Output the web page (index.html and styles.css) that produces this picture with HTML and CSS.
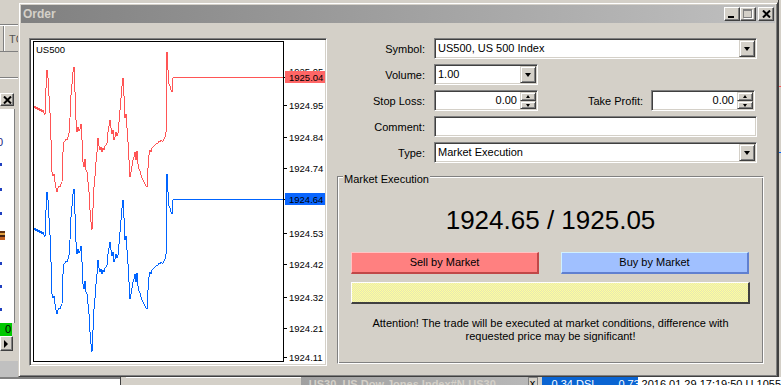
FILE: index.html
```html
<!DOCTYPE html>
<html>
<head>
<meta charset="utf-8">
<title>Order</title>
<link rel="stylesheet" href="styles.css">
</head>
<body>
<div class="desk">
  <div class="bgleft">
    <div class="bl-tool"><span class="bl-sep"></span><span class="bl-tc">TC</span></div>
    <div class="bl-rule"></div>
    <div class="bl-x">
      <svg width="9" height="8" viewBox="0 0 9 8"><path d="M1 0.5L8 7.5M8 0.5L1 7.5" stroke="#000" stroke-width="2"/></svg>
    </div>
    <div class="bl-list">
      <span class="bl-zero">0</span>
      <span class="bl-dot d1"></span>
      <span class="bl-dot d2"></span>
      <span class="bl-dot d3"></span>
      <span class="bl-ico"></span>
      <span class="bl-dot d4"></span>
      <span class="bl-dot d5"></span>
      <span class="bl-dot d6"></span>
    </div>
    <div class="bl-green">0</div>
    <div class="bl-arrow">
      <svg width="5" height="8" viewBox="0 0 5 8"><path d="M0 0L4 4L0 8Z" fill="#000"/></svg>
    </div>
    <div class="bl-dark"></div>
  </div>

  <div class="bgright">
    <span class="br-red"></span>
    <span class="br-blue"></span>
  </div>

  <div class="bgbottom">
    <div class="bb-a"></div>
    <div class="bb-b"></div>
    <div class="bb-c"></div>
    <div class="bb-title">US30, US Dow Jones Index#N-US30</div>
    <div class="bb-x">x</div>
    <div class="bb-blue">0.34 DSL &nbsp; &nbsp; &nbsp; 0.73</div>
    <div class="bb-white">2016.01.29 17:19:50 U 1055</div>
  </div>

  <div class="dialog">
    <div class="titlebar">
      <span class="title">Order</span>
      <div class="tbtns">
        <span class="tbtn tb-min"><i class="min-bar"></i></span>
        <span class="tbtn tb-max"><i class="max-box"></i></span>
        <span class="tbtn tb-close">
          <svg width="9" height="8" viewBox="0 0 9 8"><path d="M1 0.5L8 7.5M8 0.5L1 7.5" stroke="#000" stroke-width="2"/></svg>
        </span>
      </div>
    </div>

    <div class="body">
      <div class="chart">
        <svg class="chart-svg" width="294" height="324" viewBox="31 40 294 324">
          <defs>
            <polyline id="series" fill="none" points="34,108 35,106 36,109 37,107 38,110 39,108 40,111 41,109 42,112 43,110 44,113 45,115 46,88 47,70 48,78 49,96 50,113 51,140 52,172 53,176 54,174 55,182 56,188 57,192 58,188 59,186 60,187 61,184 62,182 63,152 64,142 65,141 66,139 67,140 68,137 69,133 70,118 71,95 72,84 73,72 74,67 75,92 76,120 77,132 78,127 79,131 80,129 81,124 82,140 83,162 84,167 85,159 86,170 87,172 88,182 89,192 90,210 91,222 92,230 93,208 94,187 95,176 96,162 97,152 98,138 99,146 100,150 101,147 102,152 103,148 104,150 105,146 106,145 107,143 108,132 109,126 110,120 111,128 112,134 113,130 114,140 115,137 116,132 117,136 118,133 119,122 120,110 121,98 122,86 123,78 124,96 125,118 126,114 127,128 128,142 129,160 130,177 131,172 132,166 133,160 134,157 135,152 136,160 137,151 138,164 139,169 140,171 141,175 142,178 143,180 144,182 145,184 146,186 147,187 148,168 149,155 150,150 151,152 152,148 153,147 154,146 155,145 156,144 157,143 158,143 159,141 160,142 161,140 162,141 163,141 164,139 165,137 166,132 166,100 167,52 168,70 169,84 170,86 171,90 172,92 173,78 174,77 283,77"/>
          </defs>
          <rect x="33.5" y="41.5" width="250" height="320" fill="#fff" stroke="#000"/>
          <text class="sym" x="36" y="53">US500</text>
          <use href="#series" stroke="#ff5555"/>
          <use href="#series" y="122" stroke="#0064ff"/>
          <g stroke="#000" class="ticks">
            <path d="M284 77.5h3M284 105.5h3M284 137.5h3M284 168.5h3M284 199.5h3M284 233.5h3M284 264.5h3M284 297.5h3M284 328.5h3M284 357.5h3"/>
          </g>
          <g class="axis">
            <text x="289" y="75">1925.05</text>
            <rect x="285" y="71" width="41" height="12" fill="#ff6666"/>
            <text x="289" y="81" fill="#fff">1925.04</text>
            <text x="289" y="109">1924.95</text>
            <text x="289" y="141">1924.84</text>
            <text x="289" y="172">1924.74</text>
            <rect x="285" y="193" width="41" height="12" fill="#0a66ff"/>
            <text x="289" y="203" fill="#fff">1924.64</text>
            <text x="289" y="237">1924.53</text>
            <text x="289" y="268">1924.42</text>
            <text x="289" y="301">1924.32</text>
            <text x="289" y="332">1924.21</text>
            <text x="289" y="361">1924.11</text>
          </g>
        </svg>
      </div>

      <div class="form">
        <div class="row">
          <span class="lbl">Symbol:</span>
          <div class="field wide">US500, US 500 Index<span class="dd"><i class="tri"></i></span></div>
        </div>
        <div class="row">
          <span class="lbl">Volume:</span>
          <div class="field small">1.00<span class="dd"><i class="tri"></i></span></div>
        </div>
        <div class="row">
          <span class="lbl">Stop Loss:</span>
          <div class="field small num">0.00<span class="spin"><b class="up"><i class="tri-up"></i></b><b class="dn"><i class="tri-dn"></i></b></span></div>
          <span class="lbl tp">Take Profit:</span>
          <div class="field small num">0.00<span class="spin"><b class="up"><i class="tri-up"></i></b><b class="dn"><i class="tri-dn"></i></b></span></div>
        </div>
        <div class="row">
          <span class="lbl">Comment:</span>
          <div class="field wide"></div>
        </div>
        <div class="row">
          <span class="lbl">Type:</span>
          <div class="field wide">Market Execution<span class="dd"><i class="tri"></i></span></div>
        </div>

        <div class="group">
          <span class="legend">Market Execution</span>
          <div class="quote">1924.65 / 1925.05</div>
          <div class="btns">
            <div class="btn sell">Sell by Market</div>
            <div class="btn buy">Buy by Market</div>
          </div>
          <div class="bar"></div>
          <p class="note">Attention! The trade will be executed at market conditions, difference with<br>requested price may be significant!</p>
        </div>
      </div>
    </div>
  </div>
</div>
</body>
</html>
```

FILE: styles.css
```css
* { box-sizing: border-box; }
html, body { margin: 0; padding: 0; }
body {
  width: 781px;
  height: 385px;
  overflow: hidden;
  background: #d4d0c8;
  font-family: "Liberation Sans", Arial, sans-serif;
  font-size: 11px;
  color: #000;
}
.desk { position: relative; width: 781px; height: 385px; overflow: hidden; }

/* ---------- background windows ---------- */
.bgleft {
  position: absolute; left: 0; top: 0; width: 18px; height: 377px;
  display: flex; flex-direction: column; overflow: hidden;
}
.bl-tool {
  margin-top: 24px; height: 28px; position: relative;
  border-top: 1px solid #808080; border-bottom: 1px solid #808080;
  box-shadow: inset 0 1px #fff;
}
.bl-sep { position: absolute; left: 3px; top: 1px; bottom: 0; width: 2px; border-left: 1px solid #808080; border-right: 1px solid #fff; }
.bl-tc { position: absolute; left: 9px; top: 8px; color: #555; font-size: 11px; }
.bl-rule { margin-top: 25px; height: 2px; border-top: 1px solid #808080; border-bottom: 1px solid #fff; }
.bl-x {
  margin-top: 14px; width: 14px; height: 13px;
  border: 1px solid; border-color: #fff #404040 #404040 #fff;
  box-shadow: inset -1px -1px #808080;
  display: flex; align-items: center; justify-content: center;
}
.bl-list {
  margin-top: 3px; height: 214px; width: 15px; background: #fff;
  border-right: 1px solid #808080; position: relative;
}
.bl-zero { position: absolute; left: -3px; top: 27px; color: #1a237e; font-size: 11px; }
.bl-dot { position: absolute; left: 0; width: 2px; height: 3px; background: #2040c0; }
.d1 { top: 54px; } .d2 { top: 79px; } .d3 { top: 103px; } .d4 { top: 153px; } .d5 { top: 176px; } .d6 { top: 199px; }
.bl-ico { position: absolute; left: 0; top: 122px; width: 5px; height: 9px; background: linear-gradient(#603010 0 2px, #e0a040 2px 4px, #402010 4px 6px, #c06020 6px); }
.bl-green {
  width: 12px; height: 13px; background: #00c800;
  font-size: 11px; line-height: 13px; text-align: right; padding-right: 1px;
}
.bl-arrow {
  width: 13px; height: 15px;
  border: 1px solid; border-color: #fff #404040 #404040 #fff;
  box-shadow: inset -1px -1px #808080;
  display: flex; align-items: center; justify-content: center;
}
.bl-dark { margin-top: 10px; flex: 1; background: #c0c0c0; }

.bgright { position: absolute; left: 778px; top: 0; width: 3px; height: 377px; border-left: 1px solid #404040; }
.br-red { position: absolute; left: 0; top: 86px; width: 3px; height: 1px; background: #ff5555; }
.br-blue { position: absolute; left: 0; top: 152px; width: 3px; height: 1px; background: #0064ff; }

.bgbottom {
  position: absolute; left: 0; top: 377px; width: 781px; height: 8px;
  display: flex; overflow: hidden; font-size: 11px; line-height: 13px;
}
.bb-a { width: 122px; background: #fff; border-top: 2px solid #808080; }
.bb-b { width: 6px; background: #d4d0c8; border-left: 1px solid #404040; }
.bb-c { width: 177px; background: #d4d0c8; border-top: 1px solid #fff; }
.bb-title {
  width: 230px; padding-left: 8px; padding-top: 1px;
  background: linear-gradient(90deg, #a0a0a0, #b8b8b8);
  color: #d4d0c8; font-weight: bold; white-space: nowrap;
}
.bb-x { width: 10px; background: #d4d0c8; text-align: center; border: 1px solid #808080; border-bottom: 0; line-height: 11px; }
.bb-blue { width: 96px; margin-left: 4px; background: #0a64d2; color: #fff; padding-left: 10px; padding-top: 1px; white-space: nowrap; }
.bb-white { flex: 1; background: #fff; padding-left: 4px; padding-top: 1px; white-space: nowrap; }

/* ---------- dialog ---------- */
.dialog {
  position: absolute; left: 18px; top: 2px; width: 760px; height: 375px;
  background: #d4d0c8;
  border: 1px solid; border-color: #d4d0c8 #404040 #404040 #d4d0c8;
  box-shadow: inset 1px 1px #fff, inset -1px -1px #808080;
  padding: 2px;
  display: flex; flex-direction: column;
}
.titlebar {
  height: 18px; flex: none;
  background: linear-gradient(90deg, #808080, #c0c0c0);
  display: flex; align-items: center; justify-content: space-between;
  padding: 0 1px 0 2px;
}
.title { font-weight: bold; font-size: 12px; color: #d4d0c8; }
.tbtns { display: flex; align-items: center; }
.tbtn {
  width: 16px; height: 14px; background: #d4d0c8; position: relative;
  border: 1px solid; border-color: #fff #404040 #404040 #fff;
  box-shadow: inset -1px -1px #808080;
  display: flex; align-items: center; justify-content: center;
}
.tb-close { margin-left: 2px; }
.min-bar { position: absolute; left: 3px; top: 8px; width: 6px; height: 2px; background: #000; }
.max-box {
  position: absolute; left: 2px; top: 1px; width: 9px; height: 9px;
  border: 1px solid #808080; border-top-width: 2px;
  box-shadow: 1px 1px #fff;
}

.body { flex: 1; display: flex; padding: 15px 0 0 8px; }

.chart {
  width: 298px; height: 328px; flex: none;
  background: #fff; padding: 1px;
  border: 1px solid; border-color: #808080 #fff #fff #808080;
  box-shadow: inset 1px 1px #404040, inset -1px -1px #d4d0c8;
}
.chart-svg { display: block; }
.chart-svg use, .ticks { shape-rendering: crispEdges; }
.sym { font-size: 9.5px; fill: #000; }
.axis text { font-size: 9.5px; fill: #000; }

.form { width: 427px; margin-left: 10px; display: flex; flex-direction: column; gap: 5px; }
.row { display: flex; align-items: center; height: 21px; }
.lbl { width: 97px; padding-right: 9px; text-align: right; white-space: nowrap; }
.lbl.tp { width: 113px; padding-right: 8px; }
.field {
  position: relative; height: 21px; background: #fff;
  border: 1px solid; border-color: #808080 #fff #fff #808080;
  box-shadow: inset 1px 1px #404040, inset -1px -1px #d4d0c8;
  padding: 0 0 0 3px; line-height: 19px; white-space: nowrap;
}
.field.wide { width: 323px; }
.field.small { width: 104px; }
.field.num { text-align: right; padding-right: 20px; }
.dd {
  position: absolute; right: 1px; top: 1px; width: 16px; height: 17px;
  background: #d4d0c8;
  border: 1px solid; border-color: #d4d0c8 #404040 #404040 #d4d0c8;
  box-shadow: inset 1px 1px #fff, inset -1px -1px #808080;
}
.tri {
  position: absolute; left: 4px; top: 6px; width: 0; height: 0;
  border-left: 3.5px solid transparent; border-right: 3.5px solid transparent;
  border-top: 4px solid #000;
}
.spin { position: absolute; right: 1px; top: 1px; width: 16px; height: 17px; display: flex; flex-direction: column; }
.spin b {
  position: relative; flex: 1; background: #d4d0c8;
  border: 1px solid; border-color: #d4d0c8 #404040 #404040 #d4d0c8;
  box-shadow: inset 1px 1px #fff, inset -1px -1px #808080;
}
.tri-up, .tri-dn {
  position: absolute; left: 5px; top: 2px; width: 0; height: 0;
  border-left: 2.5px solid transparent; border-right: 2.5px solid transparent;
}
.tri-up { border-bottom: 3px solid #000; }
.tri-dn { border-top: 3px solid #000; }

.group {
  position: relative; margin-top: 8px; height: 188px;
  border: 1px solid; border-color: #808080 #fff #fff #808080;
  box-shadow: inset 1px 1px #fff, inset -1px -1px #808080;
  padding-top: 28px;
}
.legend {
  position: absolute; left: 5px; top: -4px; padding: 0 1px;
  background: #d4d0c8; line-height: 13px;
}
.quote { text-align: center; font-size: 26px; line-height: 30px; }
.btns { display: flex; gap: 22px; padding: 0 13px; margin-top: 17px; }
.btn {
  width: 188px; height: 22px; text-align: center; line-height: 19px;
  border-style: solid; border-width: 1px 2px 2px 1px;
}
.sell { background: #ff8080; border-color: #ffc4c4 #c04848 #c04848 #ffc4c4; }
.buy { background: #a0c0ff; border-color: #d0f0ff #6080d0 #6080d0 #d0f0ff; }
.bar {
  margin: 8px 13px 0; height: 22px;
  border-style: solid; border-width: 1px 2px 2px 1px;
  border-color: #fff #404040 #404040 #fff;
  background-color: #ffff9c;
  background-image: repeating-conic-gradient(#ffff9c 0 25%, #e6e6b4 0 50%);
  background-size: 2px 2px;
}
.note { margin: 13px 0 0; text-align: center; line-height: 13px; }
```
